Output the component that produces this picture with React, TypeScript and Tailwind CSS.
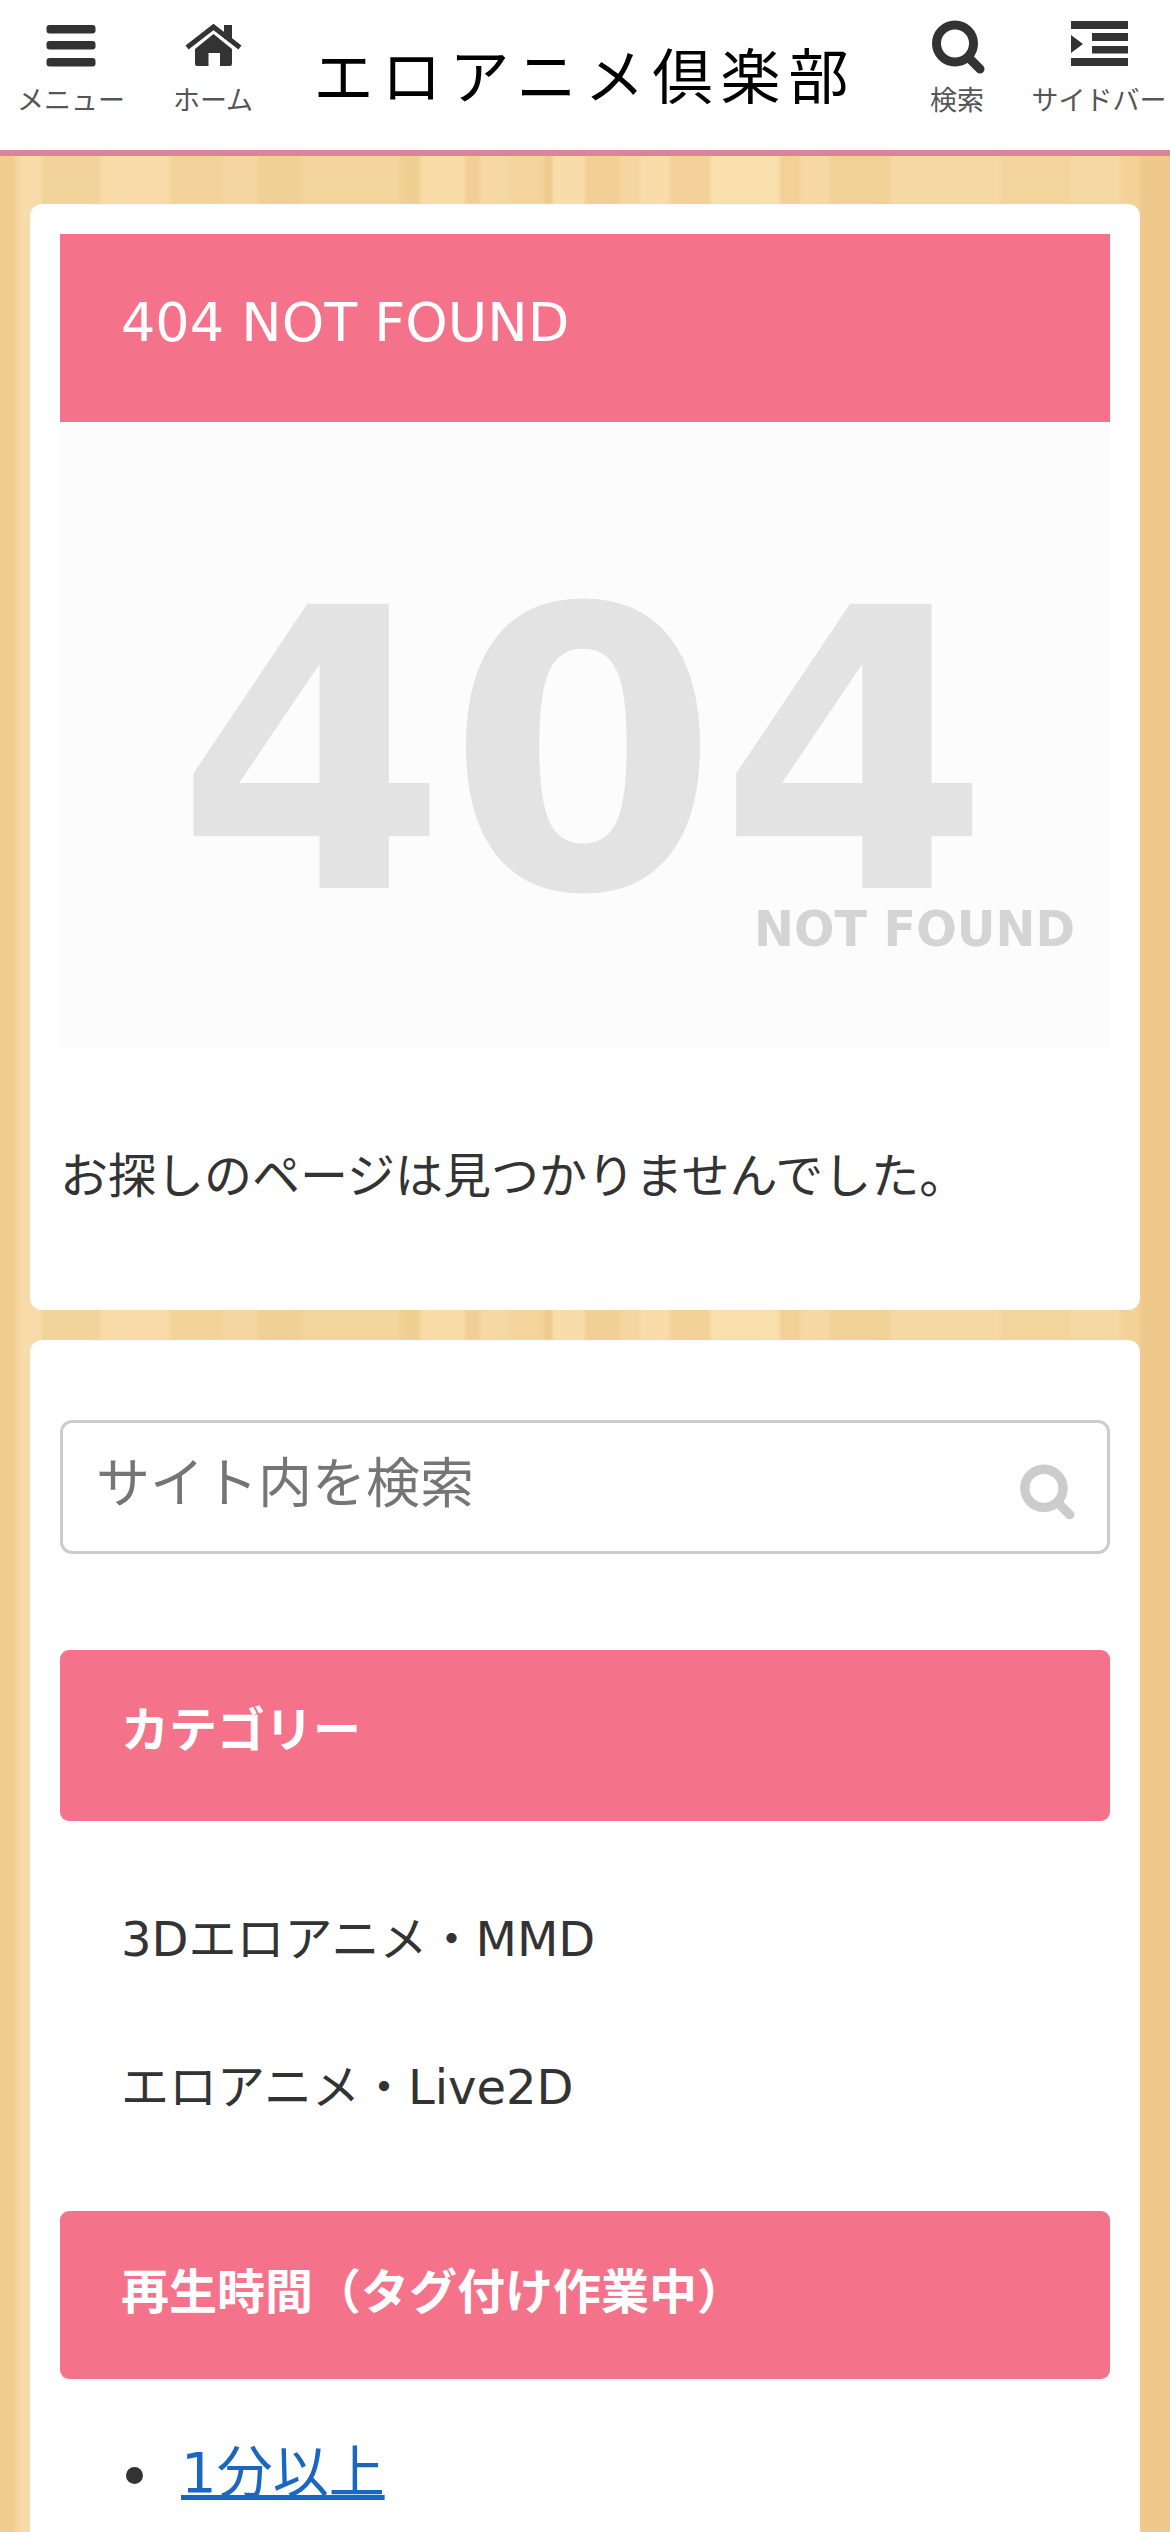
import {FormEvent} from "react";

const NavBars = () => (
    <svg className="w-[60px] h-[60px]" viewBox="0 0 60 60" fill="#333">
        <rect x="5.5" y="7" width="49" height="8.5" rx="3"/>
        <rect x="5.5" y="23" width="49" height="8.5" rx="3"/>
        <rect x="5.5" y="40" width="49" height="8.5" rx="3"/>
    </svg>
)

const NavHome = () => (
    <svg className="w-[60px] h-[60px]" viewBox="0 0 60 60" fill="#333">
        <rect x="41" y="7" width="8" height="14"/>
        <path d="M6 28 L30.5 9 L55 28" fill="none" stroke="#333" strokeWidth="5" strokeLinecap="square"/>
        <path
            d="M30.5 16 L49 31 V46 a2 2 0 0 1 -2 2 H37 V35 H25.5 V48 H14 a2 2 0 0 1 -2 -2 V31 Z"/>
    </svg>
)

const NavSearch = ({className, color}: { className: string, color: string }) => (
    <svg className={className} viewBox="0 0 60 60" fill="none" stroke={color}>
        <circle cx="28" cy="25.5" r="18.5" strokeWidth="9"/>
        <path d="M42 40 L53 51" strokeWidth="9" strokeLinecap="round"/>
    </svg>
)

const NavIndent = () => (
    <svg className="w-[60px] h-[60px]" viewBox="0 0 60 60" fill="#333">
        <rect x="2" y="3" width="57" height="8"/>
        <rect x="23" y="15" width="36" height="8"/>
        <rect x="23" y="28" width="36" height="7.5"/>
        <rect x="2" y="40" width="57" height="8"/>
        <path d="M2 17 L14 26 L2 35 Z"/>
    </svg>
)

function NavItem({label, icon}: { label: string, icon: React.ReactNode }) {
    return (
        <div className="w-[142px] shrink-0 flex flex-col items-center pt-[18px]">
            {icon}
            <span className="text-[27px] leading-[40px] text-[#555] mt-[3px] whitespace-nowrap">{label}</span>
        </div>
    )
}

export default function App() {

    const onSearch = (e: FormEvent) => {
        e.preventDefault()
    }

    return (
        <div className="h-[2532px] overflow-hidden font-['DejaVu_Sans','Noto_Sans_CJK_JP',sans-serif] text-[#333] bg-[linear-gradient(90deg,#f0cc8f_0,#f0cc8f_13px,#f6d7a1_17px,#f6d7a1_18px,#f7dba8_22px,#f7dba8_40px,#f2d39b_44px,#f2d39b_98px,#f8dba8_102px,#f8dba8_168px,#f3d39a_172px,#f3d39a_220px,#f5d6a0_224px,#f5d6a0_256px,#f1d095_260px,#f1d095_298px,#f3d49d_302px,#f3d49d_398px,#f0cf93_402px,#f0cf93_418px,#f8dba7_422px,#f8dba7_463px,#f1cf95_467px,#f1cf95_478px,#f6d8a2_482px,#f6d8a2_508px,#f4d49b_512px,#f4d49b_543px,#efcb8d_546px,#efcb8d_551px,#f8dca9_554px,#f8dca9_583px,#f2d095_587px,#f2d095_618px,#f5d5a0_622px,#f5d5a0_638px,#f9dcaa_642px,#f9dcaa_668px,#f3d198_672px,#f3d198_708px,#f9deae_712px,#f9deae_778px,#f2d096_782px,#f2d096_798px,#f6d8a2_802px,#f6d8a2_828px,#f2d196_832px,#f2d196_888px,#f6d8a4_892px,#f6d8a4_998px,#f3d49c_1002px,#f3d49c_1068px,#f6d8a2_1072px,#f6d8a2_1118px,#f3d197_1122px,#f3d197_1138px,#efc98c_1142px,#efc98c_1170px)]">
            <header className="h-[156px] bg-white border-b-[6px] border-[#d5869a] flex">
                <NavItem label="メニュー" icon={<NavBars/>}/>
                <NavItem label="ホーム" icon={<NavHome/>}/>
                <div className="flex-1 flex justify-center pt-[36px]">
                    <span className="text-[60px] leading-[74px] tracking-[8px] font-normal text-black whitespace-nowrap font-['Noto_Sans_CJK_JP',sans-serif]">エロアニメ倶楽部</span>
                </div>
                <NavItem label="検索" icon={<NavSearch className="w-[60px] h-[60px]" color="#333"/>}/>
                <NavItem label="サイドバー" icon={<NavIndent/>}/>
            </header>

            <main className="mx-[30px] mt-[48px] flex flex-col gap-[30px]">
                <section className="h-[1106px] bg-white rounded-[12px] p-[30px]">
                    <h1 className="h-[188px] bg-[#f5738a] text-white text-[54px] font-normal pl-[61px] pb-[12px] flex items-center">404 NOT FOUND</h1>
                    <svg className="block w-[1050px] h-[626px] bg-[#fcfcfc]" viewBox="0 0 1050 626"
                         fontFamily="'DejaVu Sans', sans-serif" fontWeight="700">
                        <text x="523" y="466" fontSize="390" fill="#e3e3e3" textAnchor="middle">404</text>
                        <text x="694" y="524" fontSize="50" fill="#d4d4d4" textLength={321} lengthAdjust="spacingAndGlyphs">NOT FOUND</text>
                    </svg>
                    <p className="text-[48px] leading-[72px] mt-[92px] whitespace-nowrap">お探しのページは見つかりませんでした。</p>
                </section>

                <section className="bg-white rounded-[12px] px-[30px] pt-[80px] pb-[60px]">
                    <form className="relative" onSubmit={onSearch}>
                        <input
                            className="block w-full h-[134px] border-[3px] border-[#ccc] rounded-[12px] pl-[33px] pr-[100px] pb-[6px] text-[54px] bg-white outline-none placeholder:text-[#757575]"
                            type="text" placeholder="サイト内を検索"/>
                        <button className="absolute right-[33px] top-[42px]" type="submit" aria-label="検索">
                            <NavSearch className="block w-[62px] h-[62px]" color="#ccc"/>
                        </button>
                    </form>

                    <div className="mt-[96px] h-[171px] bg-[#f5738a] rounded-[9px] pl-[61px] pb-[12px] flex items-center">
                        <h3 className="text-[48px] font-bold text-white">カテゴリー</h3>
                    </div>
                    <ul className="mt-[44px] text-[48px]">
                        <li className="h-[148px] pl-[61px] flex items-center">3Dエロアニメ・MMD</li>
                        <li className="h-[148px] pl-[61px] flex items-center">エロアニメ・Live2D</li>
                    </ul>

                    <div className="mt-[50px] h-[168px] bg-[#f5738a] rounded-[9px] pl-[61px] pb-[6px] flex items-center">
                        <h3 className="text-[48px] font-bold text-white">再生時間（タグ付け作業中）</h3>
                    </div>
                    <ul className="mt-[58px] pl-[107px] list-disc text-[56px] leading-[72px]">
                        <li className="pl-[14px]"><a className="text-[#1967c0] underline" href="#">1分以上</a></li>
                    </ul>
                </section>
            </main>
        </div>
    )
}
